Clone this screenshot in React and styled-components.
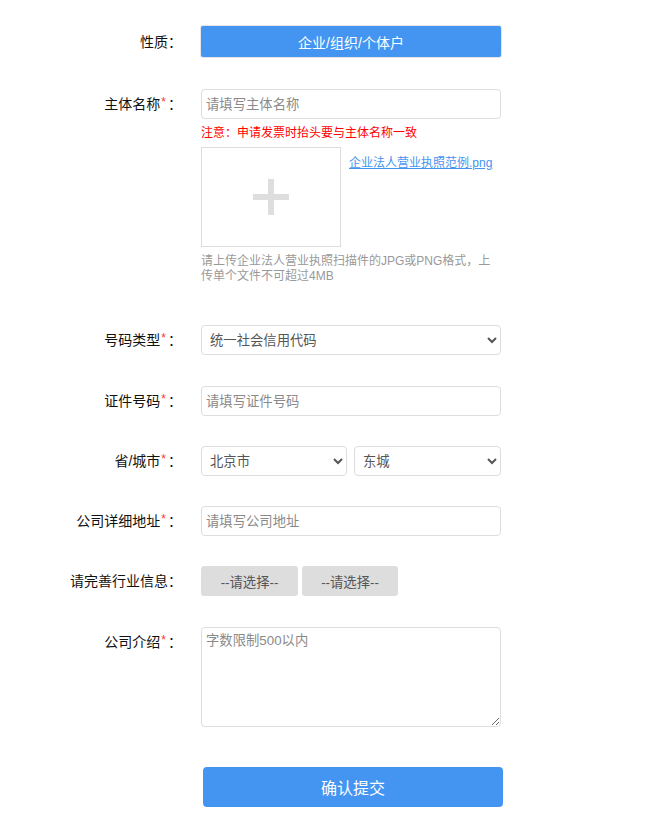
import React from 'react';
import styled, { createGlobalStyle } from 'styled-components';

const GlobalStyle = createGlobalStyle`
  body {
    margin: 0;
    background: #fff;
    font-family: "Liberation Sans", "Noto Sans CJK SC", sans-serif;
    color: #222;
  }
`;

const Form = styled.form`
  padding: 26px 0 30px;
`;

const Row = styled.div`
  display: grid;
  grid-template-columns: 182px 300px;
  column-gap: 19px;
  align-items: ${(p) => (p.top ? 'start' : 'center')};
  margin-bottom: ${(p) => (p.gap === undefined ? 30 : p.gap)}px;
`;

const Label = styled.label`
  display: block;
  height: 30px;
  overflow: hidden;
  font-size: 14px;
  line-height: 30px;
  text-align: right;
  color: #111;
  white-space: nowrap;
`;

const Star = styled.span`
  color: #f33;
  font-size: 12px;
  line-height: 0;
  vertical-align: 3px;
  padding: 0 2px 0 1px;
`;

const Field = styled.div`
  display: flex;
  flex-direction: column;
`;

const KindButton = styled.button`
  height: 31px;
  border: none;
  border-radius: 2px;
  background: #4395f1;
  color: #fff;
  font-family: inherit;
  font-size: 14px;
  box-shadow: 0 0 0 1px #e6e6e6;
`;

const TextInput = styled.input`
  box-sizing: border-box;
  display: block;
  height: 30px;
  width: 100%;
  border: 1px solid #ddd;
  border-radius: 4px;
  padding: 0 4px;
  font-family: inherit;
  font-size: 13.33px;
  color: #333;
  outline: none;
  &::placeholder {
    color: #8a8a8a;
  }
`;

const Select = styled.select`
  box-sizing: border-box;
  display: block;
  height: 30px;
  width: 100%;
  border: 1px solid #ddd;
  border-radius: 4px;
  padding: 0 4px;
  background: #fff;
  font-family: inherit;
  font-size: 13.33px;
  color: #555;
`;

const Pair = styled.div`
  display: grid;
  grid-template-columns: ${(p) => p.cols};
  gap: ${(p) => p.gap}px;
`;

const GrayButton = styled.button`
  height: 30px;
  border: none;
  border-radius: 3px;
  background: #ddd;
  color: #555;
  font-family: inherit;
  font-size: 13.33px;
`;

const Note = styled.div`
  margin-top: 6px;
  font-size: 12px;
  line-height: 16px;
  color: #f00;
`;

const Upload = styled.div`
  display: flex;
  align-items: flex-start;
  gap: 8px;
  margin-top: 6px;
`;

const UploadBox = styled.div`
  box-sizing: border-box;
  width: 140px;
  height: 100px;
  border: 1px solid #ddd;
  display: flex;
  align-items: center;
  justify-content: center;
  flex-shrink: 0;
`;

const SampleLink = styled.a`
  margin-top: 8px;
  font-size: 12px;
  line-height: 16px;
  color: #4395f1;
  text-decoration: underline;
  white-space: nowrap;
`;

const Hint = styled.p`
  margin: 7px 0 0;
  font-size: 12px;
  line-height: 15px;
  color: #999;
`;

const TextArea = styled.textarea`
  box-sizing: border-box;
  display: block;
  width: 100%;
  height: 100px;
  border: 1px solid #ddd;
  border-radius: 4px;
  padding: 4px 4px;
  font-family: inherit;
  font-size: 13.33px;
  line-height: 18px;
  outline: none;
  &::placeholder {
    color: #8a8a8a;
  }
`;

const Submit = styled.button`
  display: block;
  margin: 40px 0 0 203px;
  width: 300px;
  height: 40px;
  border: none;
  border-radius: 4px;
  background: #4395f1;
  color: #fff;
  font-family: inherit;
  font-size: 16px;
`;

const Plus = () => (
  <svg width="36" height="36" viewBox="0 0 36 36">
    <rect x="15" y="0" width="6" height="36" fill="#dedede" />
    <rect x="0" y="15" width="36" height="6" fill="#dedede" />
  </svg>
);

const Req = ({ children }) => (
  <Label>
    {children}
    <Star>*</Star>：
  </Label>
);

export default function App() {
  return (
    <>
      <GlobalStyle />
      <Form onSubmit={(e) => e.preventDefault()}>
        <Row gap={32}>
          <Label>性质：</Label>
          <KindButton type="button">企业/组织/个体户</KindButton>
        </Row>

        <Row top gap={41}>
          <Req>主体名称</Req>
          <Field>
            <TextInput placeholder="请填写主体名称" />
            <Note>注意：申请发票时抬头要与主体名称一致</Note>
            <Upload>
              <UploadBox>
                <Plus />
              </UploadBox>
              <SampleLink href="#">企业法人营业执照范例.png</SampleLink>
            </Upload>
            <Hint>请上传企业法人营业执照扫描件的JPG或PNG格式，上传单个文件不可超过4MB</Hint>
          </Field>
        </Row>

        <Row gap={31}>
          <Req>号码类型</Req>
          <Select defaultValue="统一社会信用代码">
            <option>统一社会信用代码</option>
            <option>营业执照注册号</option>
          </Select>
        </Row>

        <Row>
          <Req>证件号码</Req>
          <TextInput placeholder="请填写证件号码" />
        </Row>

        <Row>
          <Req>省/城市</Req>
          <Pair cols="146px 147px" gap={7}>
            <Select defaultValue="北京市">
              <option>北京市</option>
            </Select>
            <Select defaultValue="东城">
              <option>东城</option>
            </Select>
          </Pair>
        </Row>

        <Row>
          <Req>公司详细地址</Req>
          <TextInput placeholder="请填写公司地址" />
        </Row>

        <Row gap={31}>
          <Label>请完善行业信息：</Label>
          <Pair cols="97px 96px" gap={4}>
            <GrayButton type="button">--请选择--</GrayButton>
            <GrayButton type="button">--请选择--</GrayButton>
          </Pair>
        </Row>

        <Row top gap={0}>
          <Req>公司介绍</Req>
          <TextArea placeholder="字数限制500以内" />
        </Row>

        <Submit type="submit">确认提交</Submit>
      </Form>
    </>
  );
}
